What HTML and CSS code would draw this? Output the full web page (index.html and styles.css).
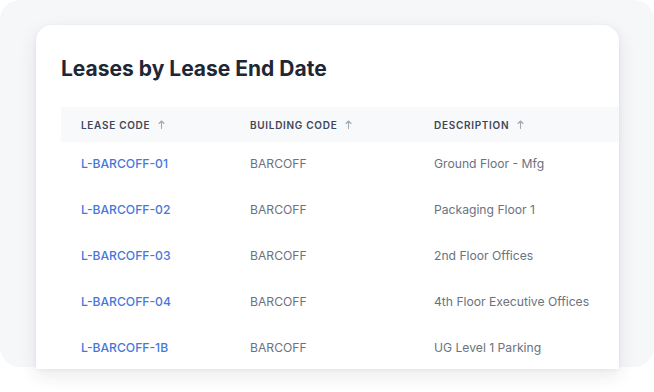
FILE: index.html
```html
<!DOCTYPE html>
<html>
<head>
<meta charset="utf-8">
<link rel="stylesheet" href="styles.css">
</head>
<body>
<div class="frame">
  <section class="card">
    <h1 class="title">Leases by Lease End Date</h1>
    <table class="leases">
      <colgroup>
        <col class="c1"><col class="c2"><col class="c3">
      </colgroup>
      <thead>
        <tr>
          <th><span class="th-label">Lease Code</span><svg class="sort" viewBox="0 0 7 9" width="7" height="9"><path d="M3.5 8.5V1M1 3.5l2.5-2.5 2.5 2.5" fill="none" stroke="currentColor" stroke-width="1.1" stroke-linecap="round" stroke-linejoin="round"/></svg></th>
          <th><span class="th-label">Building Code</span><svg class="sort" viewBox="0 0 7 9" width="7" height="9"><path d="M3.5 8.5V1M1 3.5l2.5-2.5 2.5 2.5" fill="none" stroke="currentColor" stroke-width="1.1" stroke-linecap="round" stroke-linejoin="round"/></svg></th>
          <th><span class="th-label">Description</span><svg class="sort" viewBox="0 0 7 9" width="7" height="9"><path d="M3.5 8.5V1M1 3.5l2.5-2.5 2.5 2.5" fill="none" stroke="currentColor" stroke-width="1.1" stroke-linecap="round" stroke-linejoin="round"/></svg></th>
        </tr>
      </thead>
      <tbody>
        <tr><td><a class="code" href="#">L-BARCOFF-01</a></td><td>BARCOFF</td><td>Ground Floor - Mfg</td></tr>
        <tr><td><a class="code" href="#">L-BARCOFF-02</a></td><td>BARCOFF</td><td>Packaging Floor 1</td></tr>
        <tr><td><a class="code" href="#">L-BARCOFF-03</a></td><td>BARCOFF</td><td>2nd Floor Offices</td></tr>
        <tr><td><a class="code" href="#">L-BARCOFF-04</a></td><td>BARCOFF</td><td>4th Floor Executive Offices</td></tr>
        <tr><td><a class="code" href="#">L-BARCOFF-1B</a></td><td>BARCOFF</td><td>UG Level 1 Parking</td></tr>
      </tbody>
    </table>
  </section>
</div>
</body>
</html>
```
FILE: styles.css
```css
html, body {
  margin: 0;
  padding: 0;
  background: #ffffff;
  font-family: Inter, "Noto Sans", "Liberation Sans", sans-serif;
}

body {
  min-height: 392px;
}

.frame {
  box-sizing: border-box;
  width: 654px;
  height: 367px;
  background: #f6f7f9;
  border-radius: 20px;
  padding: 25px 35px 0 36px;
}

.card {
  box-sizing: border-box;
  width: 583px;
  height: 344px;
  background: #ffffff;
  border-radius: 16px 16px 0 0;
  box-shadow: 0 6px 18px rgba(30, 40, 60, 0.1), 0 1px 4px rgba(30, 40, 60, 0.05);
  overflow: hidden;
  padding: 30px 0 0 25px;
}

.title {
  margin: 0 0 24px 0;
  font-size: 21px;
  line-height: 28px;
  font-weight: 700;
  color: #1f2735;
}

.leases {
  border-collapse: collapse;
  table-layout: fixed;
  width: 700px;
}

.c1 { width: 169px; }
.c2 { width: 184px; }
.c3 { width: 347px; }

.leases thead tr {
  background: #f8f9fb;
}

.leases th {
  height: 35px;
  padding: 0 0 0 20px;
  text-align: left;
  font-size: 10px;
  font-weight: 600;
  text-transform: uppercase;
  letter-spacing: 0.7px;
  color: #3f4756;
  white-space: nowrap;
  vertical-align: middle;
}

.th-label {
  vertical-align: middle;
}

.sort {
  margin-left: 8px;
  color: #a3a9b4;
  vertical-align: middle;
  position: relative;
  top: -1px;
}

.leases td {
  padding: 12px 0 14px 20px;
  font-size: 12.15px;
  line-height: 20px;
  color: #6b7280;
  white-space: nowrap;
}

.code {
  color: #4677dc;
  font-weight: 500;
  text-decoration: none;
}
```
